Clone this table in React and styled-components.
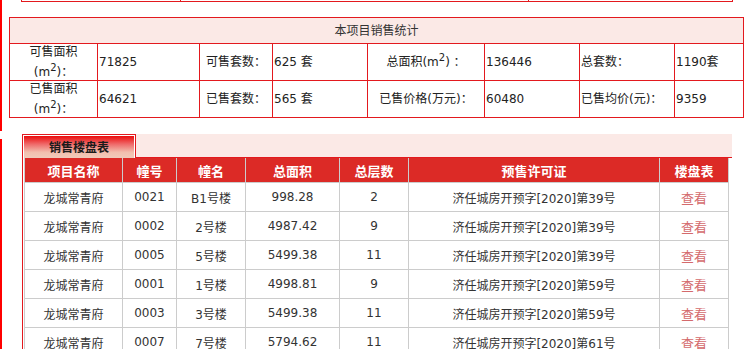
import { Fragment } from 'react'
import styled, { createGlobalStyle } from 'styled-components'

const GlobalStyle = createGlobalStyle`
  html, body {
    margin: 0;
    padding: 0;
    overflow: hidden;
    background: #fff;
  }
  body {
    font-family: "DejaVu Sans", "Noto Sans CJK SC", sans-serif;
    font-size: 12px;
    color: #222;
  }
`

const RED = '#e3191e'

const Page = styled.div`
  width: 745px;
  height: 349px;
  background:
    linear-gradient(#f00, #f00) 0 0 / 2px 131px no-repeat,
    linear-gradient(#f00, #f00) 0 139px / 2px 210px no-repeat;
`

const PrevStrip = styled.div`
  display: flex;
  width: 712px;
  margin-left: 21px;
  box-sizing: border-box;
  border: 1px solid ${RED};
  border-top: 0;
`

const PrevCell = styled.div`
  width: ${({ $w }) => $w}px;
  height: 1px;
  border-right: ${({ $last }) => ($last ? '0' : `1px solid ${RED}`)};
  box-sizing: border-box;
`

const StatsGrid = styled.div`
  display: grid;
  grid-template-columns: 88px 102px 73px 95px 117px 95px 95px 69px;
  grid-template-rows: 26px 37px 37px;
  width: 735px;
  margin: 15px 0 0 9px;
  border-top: 1px solid ${RED};
  border-left: 1px solid ${RED};
  box-sizing: border-box;
`

const StatsCell = styled.div`
  box-sizing: border-box;
  border-right: 1px solid ${RED};
  border-bottom: 1px solid ${RED};
  display: flex;
  align-items: center;
  justify-content: ${({ $left }) => ($left ? 'flex-start' : 'center')};
  text-align: ${({ $left }) => ($left ? 'left' : 'center')};
  padding-left: ${({ $left }) => ($left ? '1px' : '0')};
  line-height: 18px;
  white-space: nowrap;
`

const TwoLine = styled.span`
  line-height: 20px;
`

const StatsTitle = styled(StatsCell)`
  grid-column: 1 / -1;
  background: #fbe9e6;
  color: #333;
`

const Sup = styled.sup`
  font-size: 10px;
  line-height: 0;
  vertical-align: 5px;
`

const Lower = styled.div`
  width: 710px;
  margin: 16px 0 0 22px;
`

const TabBar = styled.div`
  display: flex;
  height: 24px;
`

const Tab = styled.div`
  width: 114px;
  box-sizing: border-box;
  border: 1px solid ${RED};
  border-bottom: 0;
  box-shadow: inset 1px 1px 0 #fff, inset -1px 0 0 #fff;
  background: linear-gradient(#ea0000 0%, #ef6a6a 40%, #f2bfae 75%, #f0cbbb 100%);
  display: flex;
  align-items: center;
  justify-content: center;
  font-family: "Noto Sans CJK SC", sans-serif;
  font-weight: bold;
  font-size: 12px;
  color: #1a1a1a;
`

const TabFill = styled.div`
  flex: 1;
  background: #fbe9e6;
  border-bottom: 1px solid ${RED};
`

const TableWrap = styled.div`
  border-left: 1px solid ${RED};
  padding-left: 1px;
`

const Grid = styled.div`
  display: grid;
  grid-template-columns: 98px 54px 69px 94px 69px 251px 69px;
  grid-template-rows: 25px;
  grid-auto-rows: 29px;
  width: 705px;
  box-sizing: border-box;
  border-left: 1px solid #ccc;
`

const Cell = styled.div`
  box-sizing: border-box;
  border-right: 1px solid #ccc;
  border-bottom: 1px solid #ccc;
  display: flex;
  align-items: center;
  justify-content: center;
  white-space: nowrap;
  color: #333;
`

const HeadCell = styled(Cell)`
  background: #dc2a26;
  color: #fff;
  font-family: "Noto Sans CJK SC", sans-serif;
  font-weight: bold;
  font-size: 13px;
`

const ViewLink = styled.span`
  font-family: "Noto Sans CJK SC", sans-serif;
  font-size: 13px;
  color: #d46a6c;
  cursor: pointer;
`

const heads = ['项目名称', '幢号', '幢名', '总面积', '总层数', '预售许可证', '楼盘表']

const rows = [
  ['0021', 'B1号楼', '998.28', '2', '39'],
  ['0002', '2号楼', '4987.42', '9', '39'],
  ['0005', '5号楼', '5499.38', '11', '39'],
  ['0001', '1号楼', '4998.81', '9', '59'],
  ['0003', '3号楼', '5499.38', '11', '59'],
  ['0007', '7号楼', '5794.62', '11', '61'],
]

const App = () => {
  return (
    <Page>
      <GlobalStyle />
      <PrevStrip>
        <PrevCell $w={159} />
        <PrevCell $w={348} />
        <PrevCell $w={203} $last />
      </PrevStrip>

      <StatsGrid>
        <StatsTitle>本项目销售统计</StatsTitle>

        <StatsCell><TwoLine>可售面积<br />(m<Sup>2</Sup>)：</TwoLine></StatsCell>
        <StatsCell $left>71825</StatsCell>
        <StatsCell>可售套数：</StatsCell>
        <StatsCell $left>625 套</StatsCell>
        <StatsCell><span>总面积(m<Sup>2</Sup>) ：</span></StatsCell>
        <StatsCell $left>136446</StatsCell>
        <StatsCell $left>总套数：</StatsCell>
        <StatsCell $left>1190套</StatsCell>

        <StatsCell><TwoLine>已售面积<br />(m<Sup>2</Sup>)：</TwoLine></StatsCell>
        <StatsCell $left>64621</StatsCell>
        <StatsCell>已售套数：</StatsCell>
        <StatsCell $left>565 套</StatsCell>
        <StatsCell>已售价格(万元)：</StatsCell>
        <StatsCell $left>60480</StatsCell>
        <StatsCell $left>已售均价(元)：</StatsCell>
        <StatsCell $left>9359</StatsCell>
      </StatsGrid>

      <Lower>
        <TabBar>
          <Tab>销售楼盘表</Tab>
          <TabFill />
        </TabBar>
        <TableWrap>
          <Grid>
            {heads.map((h) => (
              <HeadCell key={h}>{h}</HeadCell>
            ))}
            {rows.map((r, i) => (
              <Fragment key={i}>
                <Cell>龙城常青府</Cell>
                <Cell>{r[0]}</Cell>
                <Cell>{r[1]}</Cell>
                <Cell>{r[2]}</Cell>
                <Cell>{r[3]}</Cell>
                <Cell>济任城房开预字[2020]第{r[4]}号</Cell>
                <Cell>
                  <ViewLink>查看</ViewLink>
                </Cell>
              </Fragment>
            ))}
          </Grid>
        </TableWrap>
      </Lower>
    </Page>
  )
}

export default App
